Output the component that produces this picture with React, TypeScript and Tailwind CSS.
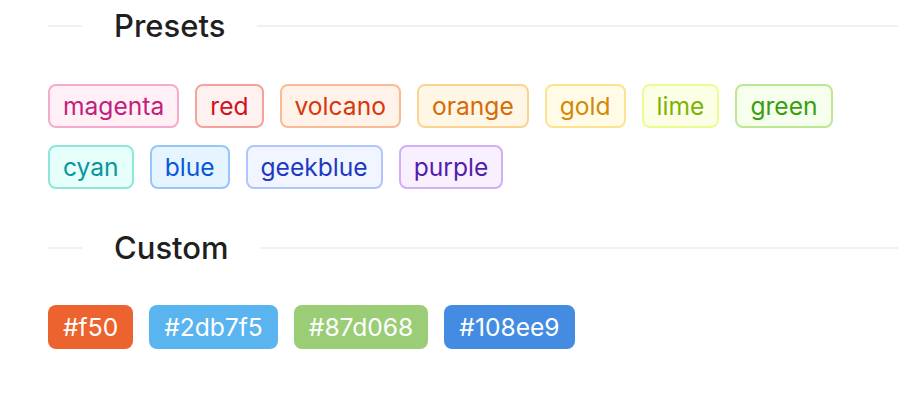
import React from 'react';

type Preset = { name: string; cls: string };

const PRESETS: Preset[] = [
  { name: 'magenta', cls: 'text-[#c41d7f] bg-[#fff0f6] border-[#f5abcd]' },
  { name: 'red', cls: 'text-[#cf1322] bg-[#fff1f0] border-[#f4a29c]' },
  { name: 'volcano', cls: 'text-[#d4380d] bg-[#fff2e8] border-[#f8bb96]' },
  { name: 'orange', cls: 'text-[#d46b08] bg-[#fff7e6] border-[#fbd391]' },
  { name: 'gold', cls: 'text-[#d48806] bg-[#fffbe6] border-[#fbe38f]' },
  { name: 'lime', cls: 'text-[#7cb305] bg-[#fcffe6] border-[#eafd92]' },
  { name: 'green', cls: 'text-[#389e0d] bg-[#f6ffed] border-[#bae991]' },
  { name: 'cyan', cls: 'text-[#08979c] bg-[#e6fffb] border-[#8fe6dd]' },
  { name: 'blue', cls: 'text-[#0958d9] bg-[#e6f4ff] border-[#97c7f9]' },
  { name: 'geekblue', cls: 'text-[#1d39c4] bg-[#f0f5ff] border-[#b0c5fb]' },
  { name: 'purple', cls: 'text-[#531dab] bg-[#f9f0ff] border-[#d2aef4]' },
];

const CUSTOM = [
  { name: '#f50', cls: 'bg-[#ec632f]' },
  { name: '#2db7f5', cls: 'bg-[#5ab4f0]' },
  { name: '#87d068', cls: 'bg-[#9acd76]' },
  { name: '#108ee9', cls: 'bg-[#438ce1]' },
];

const Divider: React.FC<{ title: string; className?: string }> = ({ title, className }) => (
  <div className={`flex items-center h-12 ${className ?? ''}`}>
    <div className="w-[34px] h-[2px] bg-[#f0f0f0]"></div>
    <span className="px-8 text-[31px] font-medium text-[#1f1f1f] leading-[48px]">{title}</span>
    <div className="flex-grow h-[2px] bg-[#f0f0f0]"></div>
  </div>
);

const App: React.FC = () => {
  return (
    <div
      className="w-[907px] h-[415px] bg-white pl-12 pr-[9px] pt-[2px] overflow-hidden"
      style={{ fontFamily: 'Inter, "Noto Sans", sans-serif' }}
    >
      <Divider title="Presets" />

      {/* Preset colour tags */}
      <div className="flex flex-wrap gap-x-4 gap-y-[17px] mt-[34px] w-[800px]">
        {PRESETS.map((p) => (
          <span
            key={p.name}
            className={`inline-block h-11 px-[13px] border-2 rounded-lg text-[24.6px] leading-10 ${p.cls}`}
          >
            {p.name}
          </span>
        ))}
      </div>

      <Divider title="Custom" className="mt-[35px]" />

      {/* Custom colour tags */}
      <div className="flex flex-wrap gap-4 mt-[33px]">
        {CUSTOM.map((c) => (
          <span
            key={c.name}
            className={`inline-block h-11 px-[15px] rounded-lg text-[24.6px] leading-[44px] text-white ${c.cls}`}
          >
            {c.name}
          </span>
        ))}
      </div>
    </div>
  );
};

export default App;
